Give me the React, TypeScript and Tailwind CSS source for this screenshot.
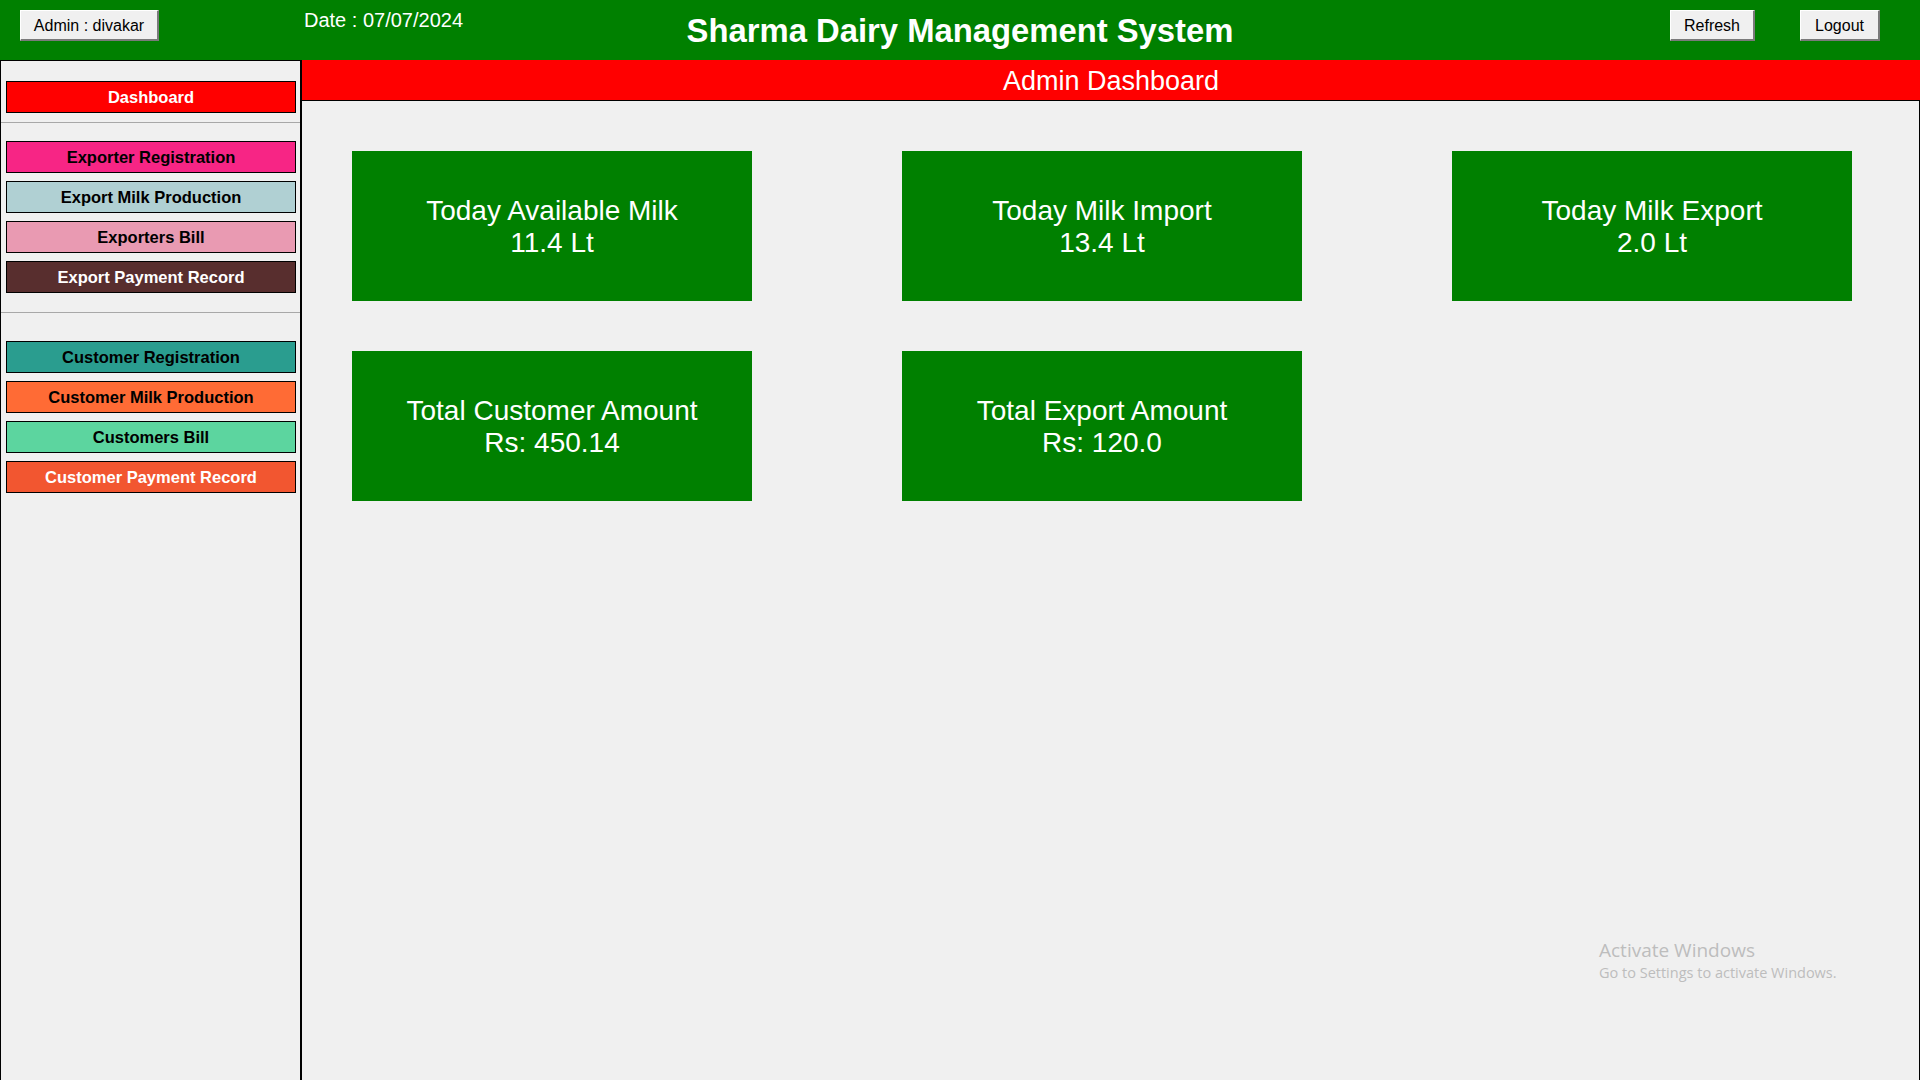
const menuTop = [
  { label: "Exporter Registration", bg: "bg-[#f72585]", fg: "text-black" },
  { label: "Export Milk Production", bg: "bg-[#b0d0d3]", fg: "text-black" },
  { label: "Exporters Bill", bg: "bg-[#e99ab2]", fg: "text-black" },
  { label: "Export Payment Record", bg: "bg-[#582e2e]", fg: "text-white" },
];

const menuBottom = [
  { label: "Customer Registration", bg: "bg-[#2a9d8f]", fg: "text-black" },
  { label: "Customer Milk Production", bg: "bg-[#ff6b35]", fg: "text-black" },
  { label: "Customers Bill", bg: "bg-[#5cd59f]", fg: "text-black" },
  { label: "Customer Payment Record", bg: "bg-[#f25630]", fg: "text-white" },
];

const cards = [
  { title: "Today Available Milk", value: "11.4 Lt" },
  { title: "Today Milk Import", value: "13.4 Lt" },
  { title: "Today Milk Export", value: "2.0 Lt" },
  { title: "Total Customer Amount", value: "Rs: 450.14" },
  { title: "Total Export Amount", value: "Rs: 120.0" },
];

function HeaderButton({ label, width }: { label: string; width: string }) {
  return (
    <button
      className={`${width} h-[31px] mt-[10px] pt-[2px] bg-[#f0f0f0] border-t border-l border-white border-b-2 border-r-2 border-b-[#7a7a7a] border-r-[#7a7a7a] text-black text-[16px] leading-none`}
    >
      {label}
    </button>
  );
}

function MenuButton({ label, bg, fg }: { label: string; bg: string; fg: string }) {
  return (
    <button
      className={`w-[290px] h-[32px] ml-[5px] border border-black ${bg} ${fg} text-[16.5px] font-bold leading-none`}
    >
      {label}
    </button>
  );
}

export default function App() {
  return (
    <div className="relative w-[1920px] h-[1080px] overflow-hidden bg-[#f0f0f0] flex flex-col font-['Liberation_Sans',Arial,sans-serif]">
      <header className="h-[60px] shrink-0 bg-[#008000] grid grid-cols-[1fr_auto_1fr]">
        <div className="flex items-start">
          <div className="ml-[20px]">
            <HeaderButton label="Admin : divakar" width="w-[139px]" />
          </div>
          <span className="ml-[145px] mt-[9px] text-white text-[20px] leading-[23px]">
            Date : 07/07/2024
          </span>
        </div>
        <h1 className="mt-[12px] text-white text-[32.8px] font-bold leading-[38px]">
          Sharma Dairy Management System
        </h1>
        <div className="flex items-start justify-end gap-[45px] pr-[40px]">
          <HeaderButton label="Refresh" width="w-[85px]" />
          <HeaderButton label="Logout" width="w-[80px]" />
        </div>
      </header>

      <div className="flex flex-1 min-h-0">
        <aside className="w-[302px] shrink-0 border-l border-t border-r-2 border-black flex flex-col">
          <div className="mt-[20px]">
            <MenuButton label="Dashboard" bg="bg-[#ff0000]" fg="text-white" />
          </div>
          <div className="mt-[9px] h-px bg-[#a8a8a8]" />
          <div className="mt-[18px] flex flex-col gap-[8px]">
            {menuTop.map((m) => (
              <MenuButton key={m.label} {...m} />
            ))}
          </div>
          <div className="mt-[19px] h-px bg-[#a8a8a8]" />
          <div className="mt-[28px] flex flex-col gap-[8px]">
            {menuBottom.map((m) => (
              <MenuButton key={m.label} {...m} />
            ))}
          </div>
        </aside>

        <main className="flex-1 flex flex-col">
          <div className="h-[40px] shrink-0 pt-[2px] bg-[#ff0000] flex items-center justify-center text-white text-[27px] leading-none">
            Admin Dashboard
          </div>
          <section className="flex-1 border-t border-r border-black pl-[50px] pt-[50px]">
            <div className="grid grid-cols-[repeat(3,400px)] gap-x-[150px] gap-y-[50px]">
              {cards.map((c) => (
                <div
                  key={c.title}
                  className="h-[150px] pt-[1px] bg-[#008000] flex flex-col items-center justify-center text-white text-[28px] leading-[32px]"
                >
                  <span>{c.title}</span>
                  <span>{c.value}</span>
                </div>
              ))}
            </div>
          </section>
        </main>
      </div>

      {/* windows watermark */}
      <div className="absolute left-[1599px] top-[938px] text-[#bdbdbd] font-['Open_Sans',sans-serif]">
        <div className="text-[19px] leading-[25px]">Activate Windows</div>
        <div className="text-[14.5px] leading-[19px]">Go to Settings to activate Windows.</div>
      </div>
    </div>
  );
}
